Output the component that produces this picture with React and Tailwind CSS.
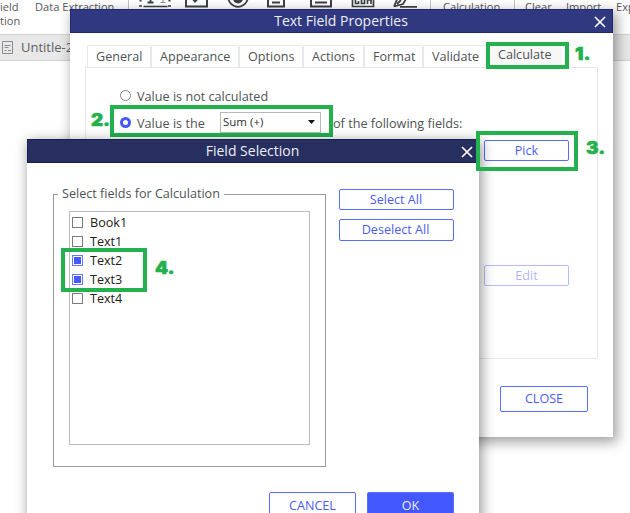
import React, { useState } from "react"

const tabs = [
    { name: "General", width: "w-[64px]", pad: "pl-[8px]" },
    { name: "Appearance", width: "w-[88px]", pad: "pl-[8px]" },
    { name: "Options", width: "w-[64px]", pad: "pl-[8px]" },
    { name: "Actions", width: "w-[61px]", pad: "pl-[8px]" },
    { name: "Format", width: "w-[59px]", pad: "pl-[8px]" },
    { name: "Validate", width: "w-[64px]", pad: "pl-[8px]" },
]

const fields = ["Book1", "Text1", "Text2", "Text3", "Text4"]

function CloseIcon() {
    return (
        <svg width="12" height="12" viewBox="0 0 12 12" fill="none" stroke="#fff" strokeWidth="1.7" >
            <path d="M1 1L11 11M11 1L1 11" />
        </svg>
    )
}

function Button({ children, className }) {
    return (
        <button className={`flex items-center justify-center rounded-[2px] border border-[#5a6cff] pt-px text-[12.6px] leading-none text-[#4a5df8] ${className}`} >
            {children}
        </button>
    )
}

function Marker({ children, className }) {
    return (
        <span className={`absolute origin-left scale-x-[1.1] font-['Inter'] text-[17px] leading-[18px] font-black text-[#22b14c] [-webkit-text-stroke:0.6px_#22b14c] ${className}`} >
            {children}
        </span>
    )
}

function Ribbon() {
    return (
        <div className="relative h-[34px] overflow-hidden text-[11.1px] leading-[14px] text-[#55575c]" >
            <div className="flex" >
                <div className="w-[35px] shrink-0" >
                    <div>ield</div>
                    <div>tion</div>
                </div>
                <div className="w-[93px] shrink-0" >Data Extraction</div>
                <svg className="shrink-0" width="315" height="9" viewBox="128 0 315 9" fill="none" stroke="#3f4044" strokeWidth="1.6" >
                    <path d="M128.5 0V9M430.5 0V9" stroke="#c4c4c4" strokeWidth="1" />
                    <path d="M139 6h3M168 6h3M143.5 6.5h24" strokeWidth="1.6" />
                    <path d="M140.5 0v1.5M169.5 0v1.5" strokeWidth="2" />
                    <path d="M150.5 0v2.5M147.500 2.500h6" strokeWidth="1.8" />
                    <path d="M163 0v2.5M160.500 2.500h5" stroke="#999" strokeWidth="1.2" />
                    <path d="M186 0v6.5h21V0M192.500 -1.500l2.500 3 3-3" strokeWidth="2" />
                    <circle cx="238" cy="-3" r="9.8" strokeWidth="1.8" />
                    <circle cx="238" cy="-1.5" r="5" fill="#3f4044" stroke="none" />
                    <path d="M268 0v6.5h16V0M272 2.500h8M311 0v6.500h20V0M315 2.500h12" strokeWidth="2" />
                    <path d="M352.500 0v6.500h21V0M355.500 0v3.500h3V1M361.500 0v3.500h3V0M367.500 4V0h3.500v4" strokeWidth="1.7" />
                    <path d="M394 6.500l3-7M394 6.500l9-2.500 3-5M397 4l4-4M400 6.800h17" strokeWidth="1.8" />
                </svg>
                <div className="w-[71px] shrink-0" >Calculation</div>
                <div className="mr-[10px] h-[9px] w-px shrink-0 bg-[#c4c4c4]" />
                <div className="w-[41px] shrink-0" >Clear</div>
                <div className="w-[50px] shrink-0" >Import</div>
                <div>Exp</div>
            </div>
        </div>
    )
}

function TextFieldProperties() {
    return (
        <section className="absolute top-[9px] left-[70px] flex h-[428px] w-[543px] flex-col bg-white text-[#505256] shadow-[3px_4px_12px_1px_rgba(0,0,0,0.38)]" >
            <header className="flex h-6 items-center border border-[#202a70] bg-[#303980] text-[14px] text-[#eeeef5]" >
                <span className="w-[540px] shrink-0 pb-[2px] text-center" >Text Field Properties</span>
                <span className="-ml-[17px] pt-px" ><CloseIcon /></span>
            </header>
            <div className="ml-[15px] w-[513px] pt-3" >
                <div className="flex h-[22px] pl-[2px] text-[12.6px] leading-[22px]" >
                    {
                        tabs.map(t => (
                            <div key={t.name} className={`shrink-0 rounded-t-[2px] border border-b-0 border-[#e8e8e8] ${t.width} ${t.pad}`} >
                                {t.name}
                            </div>
                        ))
                    }
                    <div className="w-[75px] shrink-0 bg-[#f7f7f7] pl-[11px] leading-[20px]" >Calculate</div>
                </div>
                <div className="flex h-[292px] flex-col border border-[#e8e8e8] pt-[18px] pl-[34px] text-[12.65px]" >
                    <label className="flex h-[18px] items-center" >
                        <span className="mr-[6px] size-[11px] rounded-full border border-[#858585]" />
                        <span className="pt-[2px]" >Value is not calculated</span>
                    </label>
                    <div className="mt-[7px] flex h-[22px] items-center" >
                        <span className="mr-[6px] size-[11px] rounded-full border-[3px] border-[#4358ff]" />
                        <span className="w-[83px] pt-[2px]" >Value is the</span>
                        <div className="flex h-[21px] w-[101px] items-center justify-between border border-[#b8b8b8] pr-[5px] pl-[2px] text-[11.5px] text-[#303030]" >
                            Sum (+)
                            <svg width="7" height="4" ><path d="M0 0h7L3.5 4z" fill="#111" /></svg>
                        </div>
                        <span className="ml-[12px] pt-[2px]" >of the following fields:</span>
                    </div>
                    <div className="mt-[7px] ml-[364px] flex flex-col gap-[104px]" >
                        <Button className="h-[21px] w-[85px]" >Pick</Button>
                        <Button className="h-[21px] w-[85px] opacity-45" >Edit</Button>
                    </div>
                </div>
                <Button className="mt-[27px] ml-[415px] h-[26px] w-[88px]" >CLOSE</Button>
            </div>
        </section>
    )
}

function FieldSelection() {

    const [picked, setPicked] = useState(["Text2", "Text3"])

    const toggle = (name) => {
        setPicked(prev =>
            prev.includes(name) ? prev.filter(p => p !== name) : [...prev, name]
        )
    }

    return (
        <section className="absolute top-[139px] left-[27px] h-[400px] w-[452px] bg-white text-[12.6px] shadow-[2px_3px_12px_1px_rgba(0,0,0,0.4)]" >
            <header className="flex h-6 items-center border border-[#181f53] bg-[#272e60] text-[14px] text-[#eeeef5]" >
                <span className="w-[449px] shrink-0 pb-[2px] text-center" >Field Selection</span>
                <span className="-ml-[16px] pt-px" ><CloseIcon /></span>
            </header>
            <div className="flex gap-[14px] pt-[21px] pl-[26px]" >
                <fieldset className="h-[283px] w-[272px] border border-[#999] px-[15px]" >
                    <legend className="-ml-[11px] px-[4px] leading-[20px] text-[#505256]" >
                        Select fields for Calculation
                    </legend>
                    <div className="mt-[7px] h-[234px] w-[241px] border border-[#bababf] pt-[1px] pl-[2px]" >
                        {
                            fields.map(name => (
                                <label key={name} className="flex h-[19px] items-center gap-[7px] text-[#202020]" onClick={() => toggle(name)} >
                                    <span className={`flex size-[11px] items-center justify-center border ${picked.includes(name) ? "border-[#6475ff]" : "border-[#7b7b7b]"}`} >
                                        {picked.includes(name) && <span className="size-[7px] bg-[#4358ff]" />}
                                    </span>
                                    <span className="pt-px" >{name}</span>
                                </label>
                            ))
                        }
                    </div>
                </fieldset>
                <div className="-ml-px flex flex-col gap-[9px] pt-[5px]" >
                    <Button className="h-[21px] w-[115px] pr-px" >Select All</Button>
                    <Button className="h-[22px] w-[115px] pr-[2px]" >Deselect All</Button>
                </div>
            </div>
            <div className="mt-[25px] ml-[242px] flex gap-[11px]" >
                <Button className="h-[26px] w-[87px] pt-[2px]!" >CANCEL</Button>
                <Button className="h-[26px] w-[87px] bg-[#4358ff] pt-[2px]! text-[#e8ebff]!" >OK</Button>
            </div>
        </section>
    )
}

function App() {
    return (
        <main className="relative h-[513px] w-[630px] overflow-hidden bg-white font-['Open_Sans','Noto_Sans',sans-serif] whitespace-nowrap" >
            <Ribbon />
            <div className="flex h-[27px] items-center border-y border-[#d2d2d2] bg-[#e8e8e8] text-[13px] text-[#606266]" >
                <svg className="mr-[8px] ml-[2px]" width="11" height="13" fill="none" stroke="#8b8b90" >
                    <path d="M.5.5h10v12H.5zM2.500 4.500h6M2.500 6.500h4M2.500 9.500h2M6 9.500h3" />
                </svg>
                Untitle-2
            </div>

            <TextFieldProperties />
            <div className="absolute top-[105px] left-[110px] h-[32px] w-[223px] border-4 border-[#22b14c]" />
            <Marker className="top-[111px] left-[91px]" >2.</Marker>

            <FieldSelection />
            <div className="absolute top-[42px] left-[486px] h-[27px] w-[83px] border-4 border-[#22b14c]" />
            <Marker className="top-[45px] left-[575px]" >1.</Marker>
            <div className="absolute top-[131px] left-[476px] h-[40px] w-[102px] border-4 border-[#22b14c]" />
            <Marker className="top-[139px] left-[586px]" >3.</Marker>
            <div className="absolute top-[248px] left-[61px] h-[44px] w-[86px] border-4 border-[#22b14c]" />
            <Marker className="top-[259px] left-[155px]" >4.</Marker>
        </main>
    )
}

export default App
